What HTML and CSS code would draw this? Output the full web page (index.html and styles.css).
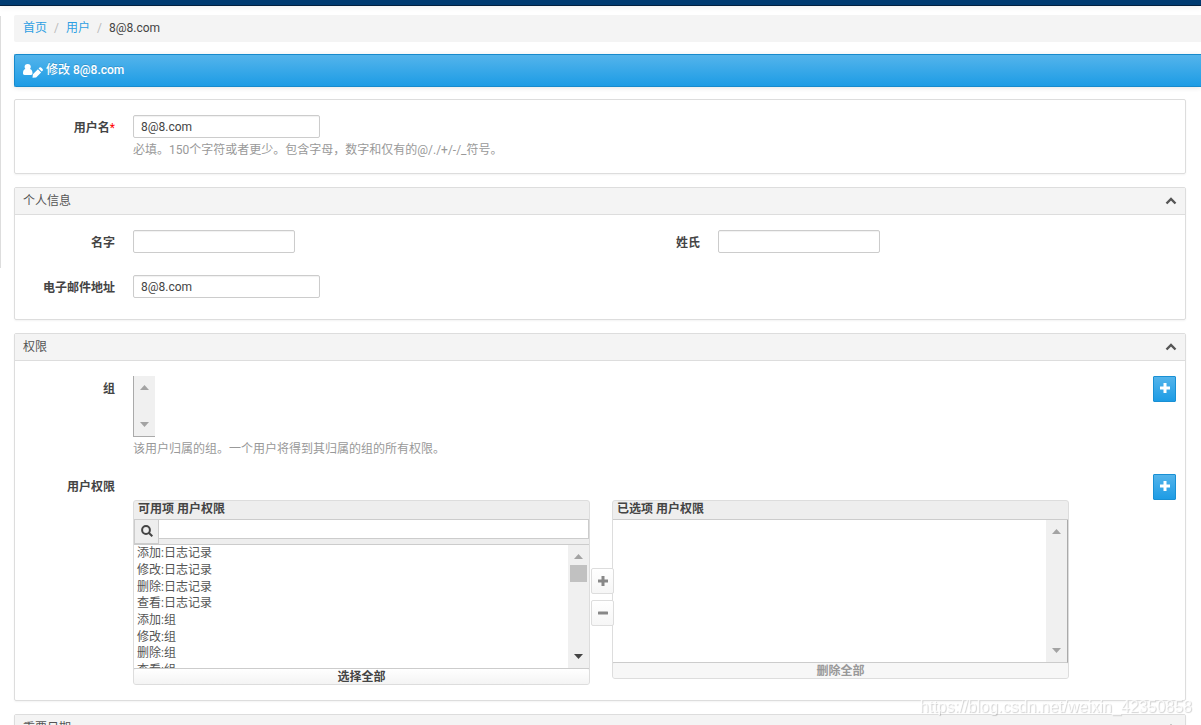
FILE: index.html
```html
<!DOCTYPE html>
<html lang="zh-CN">
<head>
<meta charset="utf-8">
<title>修改 8@8.com</title>
<link rel="stylesheet" href="styles.css">
</head>
<body>
<svg class="defs" width="0" height="0" aria-hidden="true">
  <symbol id="plus" viewBox="0 0 10 10"><path d="M3.500 0h3v3.500H10v3H6.500V10h-3V6.500H0v-3h3.500z"/></symbol>
  <symbol id="minus" viewBox="0 0 10 10"><rect y="3.500" width="10" height="3" rx=".5"/></symbol>
  <symbol id="chevron" viewBox="0 0 12 8"><path d="M1.500 6.500L6 2l4.500 4.500" fill="none" stroke="currentColor" stroke-width="2.400"/></symbol>
  <symbol id="up" viewBox="0 0 9 5"><path d="M0 5L4.500 0 9 5z"/></symbol>
  <symbol id="down" viewBox="0 0 9 5"><path d="M0 0h9L4.500 5z"/></symbol>
</svg>
<header class="topbar"></header>
<div class="layout">
  <aside class="side"></aside>
  <main class="content">
    <nav class="breadcrumb">
      <a href="#">首页</a><span class="sep">/</span><a href="#">用户</a><span class="sep">/</span><span class="current">8@8.com</span>
    </nav>
    <h1 class="title">
      <svg width="20" height="14" viewBox="0 0 20 14" fill="#fff" aria-hidden="true"><path d="M4.700 0C6.700 0 7.800 1.200 7.800 2.800c0 1-.3 1.700-.8 2.200C8.800 5.400 9.500 7 9.500 9.300c0 1.100-.5 1.700-1.500 1.700H1.500C.5 11 0 10.400 0 9.300 0 7 .6 5.400 2.400 5c-.5-.5-.8-1.200-.8-2.200C1.600 1.200 2.700 0 4.700 0z"/><path d="M9.500 13.800l.4-3.600 5-5 3.200 3.200-5 5zM15.600 4.500l.9-.9q.8-.6 1.600 0l1.500 1.500q.6.800 0 1.600l-.9.900z"/></svg>
      <span>修改 8@8.com</span>
    </h1>

    <form class="panels">
      <section class="panel">
        <div class="body">
          <div class="row">
            <label class="label" for="username">用户名<span class="required">*</span></label>
            <div class="field">
              <input class="text wide" id="username" type="text" value="8@8.com">
              <p class="help">必填。150个字符或者更少。包含字母，数字和仅有的@/./+/-/_符号。</p>
            </div>
          </div>
        </div>
      </section>

      <section class="panel">
        <h2 class="heading">个人信息<button class="toggle" type="button" aria-label="折叠"><svg width="12" height="8"><use href="#chevron"/></svg></button></h2>
        <div class="body personal">
          <div class="pair">
            <div class="row"><label class="label" for="first">名字</label><input class="text" id="first" type="text"></div>
            <div class="row"><label class="label" for="last">姓氏</label><input class="text" id="last" type="text"></div>
          </div>
          <div class="row"><label class="label" for="email">电子邮件地址</label><input class="text wide" id="email" type="text" value="8@8.com"></div>
        </div>
      </section>

      <section class="panel">
        <h2 class="heading">权限<button class="toggle" type="button" aria-label="折叠"><svg width="12" height="8"><use href="#chevron"/></svg></button></h2>
        <div class="body rights">
          <div class="row">
            <label class="label" for="groups">组</label>
            <div class="field">
              <div class="groups">
                <select class="list" id="groups" multiple></select>
                <div class="scroll" aria-hidden="true"><svg width="9" height="5"><use href="#up"/></svg><svg class="end" width="9" height="5"><use href="#down"/></svg></div>
              </div>
              <p class="help">该用户归属的组。一个用户将得到其归属的组的所有权限。</p>
            </div>
            <button class="add" type="button" aria-label="添加组"><svg width="10" height="10"><use href="#plus"/></svg></button>
          </div>
          <div class="row permissions">
            <label class="label" for="available">用户权限</label>
            <div class="field selector">
              <div class="box">
                <h3 class="boxtitle">可用项 用户权限</h3>
                <div class="search">
                  <label class="lens" for="filter" aria-label="搜索"><svg class="outline" width="12" height="12" viewBox="0 0 12 12"><circle cx="5" cy="5" r="3.900"/><path d="M8 8l3.300 3.300"/></svg></label>
                  <input class="filter" id="filter" type="text">
                </div>
                <div class="listing short">
                  <select class="list" id="available" multiple>
                    <option>添加:日志记录</option><option>修改:日志记录</option><option>删除:日志记录</option><option>查看:日志记录</option><option>添加:组</option><option>修改:组</option><option>删除:组</option><option>查看:组</option>
                  </select>
                  <div class="scroll" aria-hidden="true"><svg width="9" height="5"><use href="#up"/></svg><span class="thumb"></span><svg class="end active" width="9" height="5"><use href="#down"/></svg></div>
                </div>
                <button class="all" type="button">选择全部</button>
              </div>
              <div class="chooser">
                <button class="move" type="button" aria-label="选择"><svg width="10" height="10"><use href="#plus"/></svg></button>
                <button class="move" type="button" aria-label="删除"><svg width="10" height="10"><use href="#minus"/></svg></button>
              </div>
              <div class="box chosen">
                <h3 class="boxtitle">已选项 用户权限</h3>
                <div class="listing tall">
                  <select class="list" aria-label="已选项 用户权限" multiple></select>
                  <div class="scroll" aria-hidden="true"><svg width="9" height="5"><use href="#up"/></svg><svg class="end" width="9" height="5"><use href="#down"/></svg></div>
                </div>
                <button class="all" type="button">删除全部</button>
              </div>
            </div>
            <button class="add" type="button" aria-label="添加用户权限"><svg width="10" height="10"><use href="#plus"/></svg></button>
          </div>
        </div>
      </section>

      <section class="panel">
        <h2 class="heading">重要日期<button class="toggle" type="button" aria-label="折叠"><svg width="12" height="8"><use href="#chevron"/></svg></button></h2>
      </section>
    </form>
  </main>
</div>
<div class="watermark">https://blog.csdn.net/weixin_42350858</div>
</body>
</html>
```

FILE: styles.css
```css
* { box-sizing: border-box; }
html { overflow: hidden; }
body {
  margin: 0;
  background: #fff;
  color: #555;
  font: 12px/18px Roboto, "Noto Sans CJK SC", sans-serif;
}
h1, h2, h3, p { margin: 0; font-size: 12px; }
a { color: #2d9fe3; text-decoration: none; }
button, input, select { font: inherit; color: inherit; margin: 0; padding: 0; border-radius: 0; outline: 0; }
svg { display: block; flex: none; fill: currentColor; }
.defs { position: absolute; }

.topbar {
  height: 6px;
  background: #003b71;
  border-bottom: 1px solid #02203f;
  box-shadow: 0 1px 6px rgba(0, 0, 0, .08);
}
.layout { display: flex; align-items: flex-start; }
.side { flex: none; width: 1px; height: 252px; margin-top: 10px; background: #ddd; }
.content { flex: 1; min-width: 0; padding: 9px 15px 0 13px; }

.breadcrumb {
  display: flex;
  height: 27px;
  margin-right: -15px;
  padding: 4px 9px;
  background: #f4f4f4;
  border-radius: 2px 0 0 2px;
}
.sep { width: 19px; text-align: center; color: #bbb; }
.current { color: #444; }
.title {
  display: flex;
  gap: 3px;
  height: 33px;
  margin: 12px -15px 12px 0;
  padding: 6px 8px;
  color: #fff;
  font-weight: 500;
  background: linear-gradient(#54b4eb, #1d9ce5);
  border: 1px solid #178acc;
  border-right: 0;
  border-radius: 2px 0 0 2px;
  box-shadow: 0 1px 5px rgba(0, 0, 0, .1);
  text-shadow: 0 -1px 0 rgba(0, 0, 0, .15);
}
.title svg { margin-top: 3px; }

.panels { display: flex; flex-direction: column; gap: 13px; }
.panel {
  border: 1px solid #ddd;
  border-radius: 2px;
  box-shadow: 0 1px 2px rgba(0, 0, 0, .05);
}
.heading {
  display: flex;
  justify-content: space-between;
  height: 27px;
  padding: 4px 8px 0;
  font-weight: 400;
  background: #f4f4f4;
  border-bottom: 1px solid #ddd;
}
.toggle { display: flex; align-items: flex-start; height: 18px; padding-top: 5px; background: none; border: 0; color: #555; }
.body { padding: 15px 9px 11px 0; }
.personal { padding-bottom: 21px; }
.rights { padding-bottom: 15px; }
.row { display: flex; align-items: flex-start; gap: 18px; }
.pair { display: grid; grid-template-columns: 1fr 1fr; margin: 0 -9px 22px 0; }
.label { flex: none; width: 100px; padding-top: 4px; text-align: right; font-weight: 700; color: #444; }
.required { color: #f00; font-weight: 400; }
.field { flex: 1; min-width: 0; }
.text {
  display: block;
  width: 162px;
  height: 23px;
  padding: 0 7px;
  color: #444;
  background: #fff;
  border: 1px solid #ccc;
  border-radius: 2px;
  box-shadow: inset 0 1px 1px rgba(0, 0, 0, .06);
}
.wide { width: 187px; }
.help { padding: 3px 0; color: #999; }

.groups { display: flex; width: 22px; height: 61px; border: solid #aaa; border-width: 0 0 1px 1px; }
.list { flex: 1; width: 0; min-width: 0; height: 100%; border: 0; background: #fff; overflow: hidden; }
.list option { height: 17px; min-height: 16px; padding: 0 3px; }
.list option:nth-child(3n) { height: 16px; }
.list option:first-child { margin-top: -2px; }
.scroll {
  flex: none;
  display: flex;
  flex-direction: column;
  align-items: center;
  width: 21px;
  padding: 9px 0;
  background: #f0f0f0;
  color: #a3a3a3;
}
.thumb { width: 17px; height: 17px; margin-top: 6px; background: #c1c1c1; }
.end { margin-top: auto; }
.active { color: #444; }

.add {
  display: flex;
  justify-content: center;
  align-items: flex-start;
  flex: none;
  width: 23px;
  height: 26px;
  padding-top: 6px;
  color: #fff;
  background: linear-gradient(#54b4eb, #1d9ce5);
  border: 1px solid #1990d4;
  border-radius: 1px;
}
.permissions { margin-top: 13px; }
.selector { display: flex; align-items: flex-start; padding-top: 26px; }
.box { flex: 0 1 457px; min-width: 0; background: #eee; border: 1px solid #ddd; border-radius: 3px; }
.boxtitle { height: 19px; padding-left: 4px; line-height: 17px; color: #444; border-bottom: 1px solid #ccc; }
.search { display: flex; height: 24px; }
.lens { display: flex; justify-content: center; width: 25px; padding-top: 5px; border: 1px solid #ccc; border-top: 0; }
.outline { fill: none; stroke: #444; stroke-width: 2px; }
.filter { flex: 1; min-width: 0; height: 19px; padding: 0 4px; background: #fff; border: solid #ccc; border-width: 0 1px 1px 0; }
.listing { display: flex; border-bottom: 1px solid #ccc; }
.short { height: 125px; border-top: 1px solid #ccc; }
.tall { height: 143px; border-right: 1px solid #aaa; }
.all {
  display: block;
  width: 100%;
  height: 15px;
  line-height: 16px;
  font-weight: 700;
  color: #444;
  background: linear-gradient(#fff, #f4f4f4);
  border: 0;
  border-radius: 2px;
}
.chosen .all { color: #999; background: #f7f7f7; }
.chooser { flex: none; display: flex; flex-direction: column; gap: 6px; width: 22px; padding: 68px 0 0 1px; }
.move {
  display: flex;
  justify-content: center;
  align-items: flex-start;
  width: 23px;
  height: 26px;
  padding-top: 7px;
  position: relative;
  z-index: 1;
  color: #888;
  background: linear-gradient(#fff, #f6f6f6);
  border: 1px solid #ddd;
  border-radius: 2px;
}
.watermark {
  position: fixed;
  right: 9px;
  bottom: 8px;
  font: 16px/20px "Liberation Sans", sans-serif;
  color: rgba(255, 255, 255, .8);
  text-shadow: 1px 1px 1px rgba(0, 0, 0, .18);
}
```
